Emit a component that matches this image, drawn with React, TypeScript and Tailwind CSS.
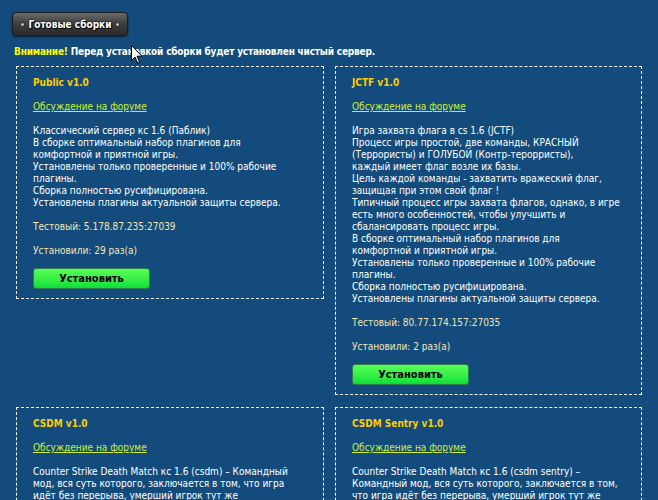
import { Fragment } from "react";

type Build = {
  title: string;
  lines: string[];
  test?: string;
  installs?: number;
};

const builds: Build[] = [
  {
    title: "Public v1.0",
    lines: [
      "Классический сервер кс 1.6 (Паблик)",
      "В сборке оптимальный набор плагинов для",
      "комфортной и приятной игры.",
      "Установлены только проверенные и 100% рабочие",
      "плагины.",
      "Сборка полностью русифицирована.",
      "Установлены плагины актуальной защиты сервера.",
    ],
    test: "5.178.87.235:27039",
    installs: 29,
  },
  {
    title: "JCTF v1.0",
    lines: [
      "Игра захвата флага в cs 1.6 (JCTF)",
      "Процесс игры простой, две команды, КРАСНЫЙ",
      "(Террористы) и ГОЛУБОЙ (Контр-терорристы),",
      "каждый имеет флаг возле их базы.",
      "Цель каждой команды - захватить вражеский флаг,",
      "защищая при этом свой флаг !",
      "Типичный процесс игры захвата флагов, однако, в игре",
      "есть много особенностей, чтобы улучшить и",
      "сбалансировать процесс игры.",
      "В сборке оптимальный набор плагинов для",
      "комфортной и приятной игры.",
      "Установлены только проверенные и 100% рабочие",
      "плагины.",
      "Сборка полностью русифицирована.",
      "Установлены плагины актуальной защиты сервера.",
    ],
    test: "80.77.174.157:27035",
    installs: 2,
  },
  {
    title: "CSDM v1.0",
    lines: [
      "Counter Strike Death Match кс 1.6 (csdm) – Командный",
      "мод, вся суть которого, заключается в том, что игра",
      "идёт без перерыва, умерший игрок тут же",
      "возрождается на случайном месте карты.",
    ],
  },
  {
    title: "CSDM Sentry v1.0",
    lines: [
      "Counter Strike Death Match кс 1.6 (csdm sentry) –",
      "Командный мод, вся суть которого, заключается в том,",
      "что игра идёт без перерыва, умерший игрок тут же",
      "возрождается на случайном месте карты.",
    ],
  },
];

const BuildCard = ({ build }: { build: Build }) => (
  <div className="border border-dashed border-white px-4 pt-[10px] pb-[9px] text-[10px] leading-[12px]">
    <h3 className="font-bold text-[#ffcc00] mb-3">{build.title}</h3>
    <a href="#" className="block w-fit underline text-[#ccee33] mb-3">
      Обсуждение на форуме
    </a>
    <p className="text-white mb-3 whitespace-nowrap">
      {build.lines.map((l, i) => (
        <Fragment key={i}>
          {l}
          {i < build.lines.length - 1 && <br />}
        </Fragment>
      ))}
    </p>
    {build.test && (
      <>
        <p className="text-[#f3e4b4] mb-3">Тестовый: {build.test}</p>
        <p className="text-[#f3e4b4] mb-[11px]">Установили: {build.installs} раз(а)</p>
        <button className="w-[117px] h-[21px] rounded-[3px] border border-[#2f7a52] bg-gradient-to-b from-[#55ff55] to-[#00e03a] font-bold text-[11px] text-black">
          Установить
        </button>
      </>
    )}
  </div>
);

export default function App() {
  return (
    <div className="relative w-[658px] h-[500px] overflow-hidden bg-[#134c7c] font-['DejaVu_Sans_Condensed','Liberation_Sans',sans-serif]">
      <div className="pl-3 pt-3">
        <button className="relative flex items-center justify-center w-[116px] h-[24px] rounded-[4px] border border-[#1c1c1c] bg-gradient-to-b from-[#6a6a6a] via-[#3e3e3e] to-[#2a2a2a] shadow-[0_1px_2px_rgba(0,0,0,0.6)]">
          <span className="absolute left-[8px] top-[10px] w-[3px] h-[3px] rounded-full bg-[#bdbdbd] shadow-[0_0_2px_#000]" />
          <span className="absolute right-[8px] top-[10px] w-[3px] h-[3px] rounded-full bg-[#bdbdbd] shadow-[0_0_2px_#000]" />
          <span className="text-white font-bold text-[10px] [text-shadow:1px_1px_1px_#000,0_0_2px_#000]">Готовые сборки</span>
        </button>
      </div>
      <p className="pl-[14px] mt-[10px] text-[10px] leading-[12px] font-bold tracking-[-0.2px] text-white">
        <span className="text-[#ffff00]">Внимание!</span> Перед установкой сборки будет установлен чистый сервер.
      </p>
      <div className="grid grid-cols-[308px_307px] gap-x-[11px] gap-y-3 items-start pl-4 mt-2">
        {builds.map((b) => (
          <BuildCard key={b.title} build={b} />
        ))}
      </div>

      {/* mouse pointer */}
      <svg className="absolute left-[131px] top-[45px]" width="12" height="19" viewBox="0 0 12 19">
        <path d="M0.5 0.5 L0.5 15.5 L4 12 L6.5 18 L8.5 17 L6 11.2 L11 11.2 Z" fill="#fff" stroke="#000" strokeWidth="1" />
      </svg>
    </div>
  );
}
